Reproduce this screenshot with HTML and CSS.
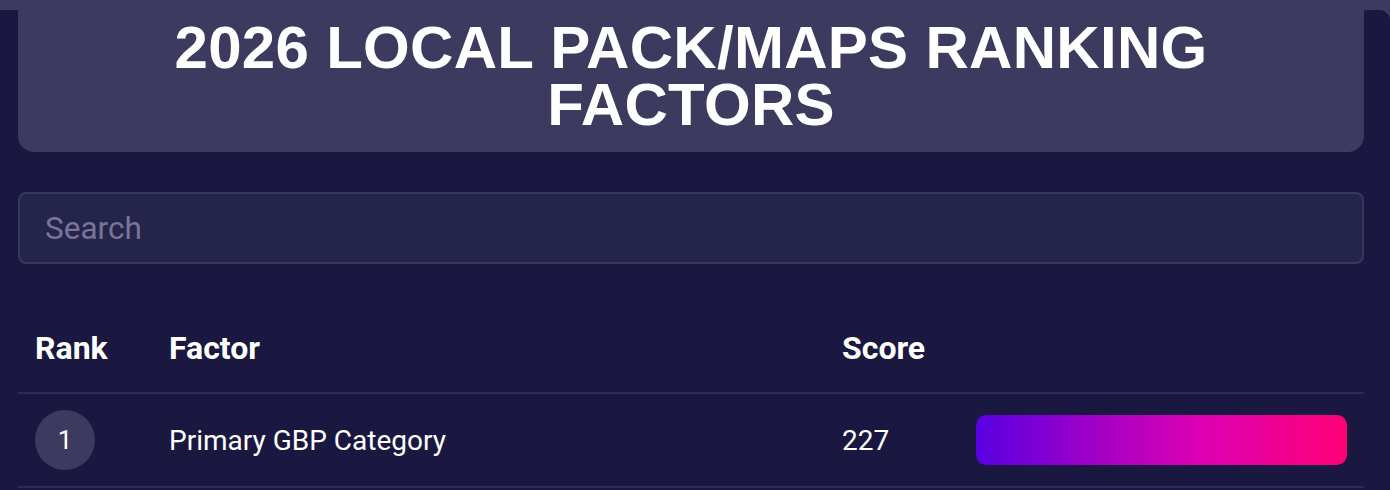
FILE: index.html
```html
<!DOCTYPE html>
<html lang="en">
<head>
<meta charset="utf-8">
<title>2026 Local Pack/Maps Ranking Factors</title>
<link rel="stylesheet" href="styles.css">
</head>
<body>
<div class="page">
  <header class="hero">
    <h1 class="hero-title">2026 LOCAL PACK/MAPS RANKING FACTORS</h1>
  </header>
  <div class="search-wrap">
    <input class="search" type="text" placeholder="Search">
  </div>
  <table class="factors">
    <colgroup>
      <col class="c-rank"><col class="c-factor"><col class="c-score"><col class="c-bar">
    </colgroup>
    <thead>
      <tr><th>Rank</th><th>Factor</th><th>Score</th><th></th></tr>
    </thead>
    <tbody>
      <tr>
        <td><span class="rank">1</span></td>
        <td>Primary GBP Category</td>
        <td>227</td>
        <td><div class="bar" style="width:100%"></div></td>
      </tr>
    </tbody>
  </table>
</div>
</body>
</html>
```
FILE: styles.css
```css
html, body {
  margin: 0;
  padding: 0;
}
body {
  background: #3c3a5e;
  font-family: Roboto, "Liberation Sans", sans-serif;
  color: #ffffff;
}
.page {
  display: flow-root;
  margin-top: 10px;
  background: #1a1840;
  border-top-right-radius: 10px;
  padding: 0 26px 40px 18px;
  min-height: 600px;
}
.hero {
  margin-top: -10px;
  background: #3c3a5e;
  border-radius: 0 0 16px 16px;
  height: 152px;
  box-sizing: border-box;
  padding: 19px 140px 0;
}
.hero-title {
  margin: 0;
  text-align: center;
  font-family: "Liberation Sans", Arial, sans-serif;
  font-weight: 700;
  font-size: 60px;
  line-height: 57px;
  letter-spacing: 0.3px;
  color: #ffffff;
}
.search-wrap {
  margin-top: 40px;
}
.search {
  display: block;
  width: 100%;
  box-sizing: border-box;
  height: 72px;
  background: #25244a;
  border: 2px solid #38375c;
  border-radius: 8px;
  padding: 0 25px;
  font-family: Roboto, sans-serif;
  font-size: 31.5px;
  color: #ffffff;
  outline: none;
}
.search::placeholder {
  color: #77759a;
}
.factors {
  margin-top: 40px;
  width: 1346px;
  border-collapse: collapse;
  table-layout: fixed;
}
.c-rank { width: 134px; }
.c-factor { width: 673px; }
.c-score { width: 134px; }
.c-bar { width: 405px; }
.factors th {
  text-align: left;
  font-weight: 700;
  font-size: 32px;
  height: 88px;
  padding: 0 17px;
  border-bottom: 2px solid #2e2c56;
}
.factors td {
  font-size: 28px;
  height: 92px;
  padding: 0 17px;
  border-bottom: 2px solid #2e2c56;
  vertical-align: middle;
}
.rank {
  display: flex;
  align-items: center;
  justify-content: center;
  width: 60px;
  height: 60px;
  border-radius: 50%;
  background: #3c3a5e;
  font-size: 26px;
}
.bar {
  height: 50px;
  border-radius: 10px;
  background: linear-gradient(90deg, #5800e2 0%, #a800c4 35%, #dc00b4 60%, #ff0076 100%);
}
```
